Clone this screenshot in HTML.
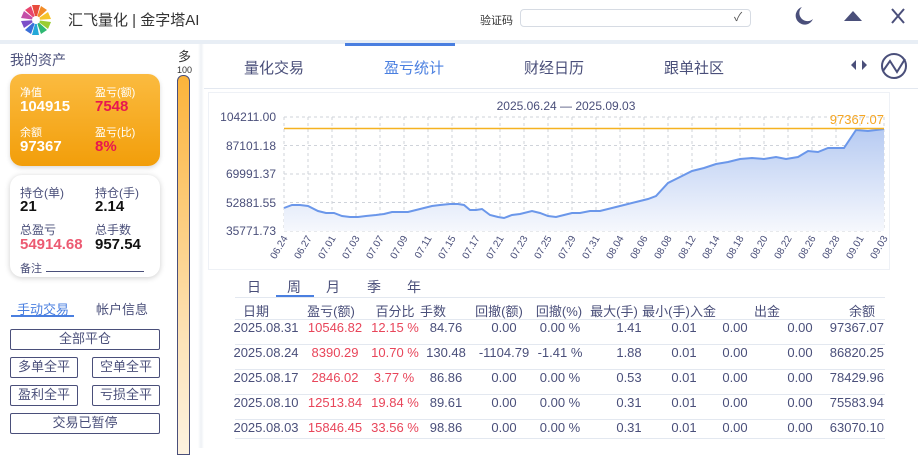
<!DOCTYPE html><html><head><meta charset="utf-8"><style>
*{margin:0;padding:0;box-sizing:border-box}
body{width:918px;height:448px;overflow:hidden;background:#fff;font-family:"Liberation Sans","Noto Sans CJK SC",sans-serif;color:#4a4f7a;position:relative}
.a{position:absolute;white-space:nowrap}
.btn{position:absolute;border:1px solid #4a4f7a;border-radius:2px;font-size:13px;text-align:center;line-height:18px;height:21px;color:#4a4f7a}
.c{position:absolute;transform:translateX(-50%);white-space:nowrap;font-size:13px}
.r{color:#e8455a}
.line{position:absolute;left:235px;width:650px;height:1px;background:#e3e8f0}
.lab{font-size:11px;color:#fff}
.val{font-size:15px;font-weight:bold;color:#fff}
.lab2{font-size:12px;color:#4a4f7a}
.val2{font-size:15px;font-weight:bold;color:#111}
</style></head><body>
<svg class="a" style="left:18px;top:4px" width="36" height="32" viewBox="-16 -16 32 32">
<path d="M0 0 L-4 -15 L4 -15Z" fill="#e84b3c"/><path d="M0 0 L5 -14 L11 -10Z" fill="#f28c28"/>
<path d="M0 0 L12 -8 L15 -1Z" fill="#f6c42a"/><path d="M0 0 L15 2 L12 9Z" fill="#9acd32"/>
<path d="M0 0 L11 10 L5 14Z" fill="#2eb872"/><path d="M0 0 L3 15 L-4 15Z" fill="#23a8d8"/>
<path d="M0 0 L-5 14 L-11 10Z" fill="#3a6fd8"/><path d="M0 0 L-12 8 L-15 1Z" fill="#7b4fc9"/>
<path d="M0 0 L-15 -2 L-12 -9Z" fill="#c44fa8"/><path d="M0 0 L-11 -10 L-5 -14Z" fill="#e8456e"/>
<circle r="4" fill="#fff"/></svg>
<div class="a" style="left:68px;top:9px;font-size:15px;color:#333">汇飞量化 | 金字塔AI</div>
<div class="a" style="left:480px;top:12px;font-size:11px;color:#333">验证码</div>
<div class="a" style="left:520px;top:9px;width:231px;height:18px;border:1px solid #d6dbe3;border-radius:4px"></div>
<div class="a" style="left:734px;top:8px;font-size:12px;color:#555">✓</div>
<svg class="a" style="left:793px;top:5px" width="22" height="22" viewBox="0 0 22 22"><path d="M9 2 A9 9 0 1 0 20 14 A7 7 0 0 1 9 2Z" fill="#4a4f7a"/></svg>
<svg class="a" style="left:843px;top:9px" width="20" height="14"><path d="M1 12 L10 2 L19 12Z" fill="#4a4f7a"/></svg>
<svg class="a" style="left:890px;top:7px" width="16" height="18"><path d="M2 2 L14 16 M14 2 L2 16" stroke="#4a4f7a" stroke-width="2"/></svg>
<div class="a" style="left:0;top:40px;width:918px;height:4px;background:#e8eef5"></div>
<div class="a" style="left:10px;top:50px;font-size:14px;color:#4a4f7a">我的资产</div>
<div class="a" style="left:10px;top:74px;width:150px;height:92px;border-radius:12px;background:linear-gradient(#fbbb40,#f29e0a);box-shadow:0 2px 5px rgba(0,0,0,.15)"></div>
<div class="a lab" style="left:20px;top:84px">净值</div><div class="a val" style="left:20px;top:98px">104915</div>
<div class="a lab" style="left:95px;top:84px">盈亏(额)</div><div class="a val" style="left:95px;top:98px;color:#e8174f">7548</div>
<div class="a lab" style="left:20px;top:124px">余额</div><div class="a val" style="left:20px;top:138px">97367</div>
<div class="a lab" style="left:95px;top:124px">盈亏(比)</div><div class="a val" style="left:95px;top:138px;color:#e8174f">8%</div>
<div class="a" style="left:10px;top:175px;width:150px;height:102px;border-radius:12px;background:#fff;box-shadow:0 1px 6px rgba(0,0,0,.2)"></div>
<div class="a lab2" style="left:20px;top:184px">持仓(单)</div><div class="a val2" style="left:20px;top:198px">21</div>
<div class="a lab2" style="left:95px;top:184px">持仓(手)</div><div class="a val2" style="left:95px;top:198px">2.14</div>
<div class="a lab2" style="left:20px;top:221px">总盈亏</div><div class="a val2" style="left:20px;top:236px;color:#ec5a72">54914.68</div>
<div class="a lab2" style="left:95px;top:221px">总手数</div><div class="a val2" style="left:95px;top:236px">957.54</div>
<div class="a" style="left:20px;top:260px;font-size:11px">备注</div>
<div class="a" style="left:46px;top:271px;width:98px;height:1px;background:#4a4f7a"></div>
<div class="a" style="left:178px;top:50px;font-size:13px;line-height:14px;color:#333">多</div>
<div class="a" style="left:177px;top:65px;font-size:9px;line-height:10px;width:16px;color:#333;font-family:'Liberation Sans Narrow','Liberation Sans',sans-serif">100</div>
<div class="a" style="left:177px;top:75px;width:13px;height:380px;border:1px solid #4a4f7a;border-radius:6px 6px 0 0;background:linear-gradient(#fbb33a,#fde3b8 70%,#fdf2e0)"></div>
<div class="a" style="left:198px;top:44px;width:6px;height:404px;background:linear-gradient(90deg,#fff,#eef1f5,#fff)"></div>
<div class="a" style="left:17px;top:299px;font-size:13px;color:#4a7fe0">手动交易</div>
<div class="a" style="left:11px;top:315px;width:63px;height:2px;background:#4a7fe0"></div>
<div class="a" style="left:96px;top:299px;font-size:13px;color:#4a4f7a">帐户信息</div>
<div class="btn" style="left:10px;top:329px;width:150px">全部平仓</div>
<div class="btn" style="left:10px;top:357px;width:68px">多单全平</div>
<div class="btn" style="left:92px;top:357px;width:68px">空单全平</div>
<div class="btn" style="left:10px;top:385px;width:68px">盈利全平</div>
<div class="btn" style="left:92px;top:385px;width:68px">亏损全平</div>
<div class="btn" style="left:10px;top:413px;width:150px">交易已暂停</div>
<div class="a" style="left:345px;top:43px;width:110px;height:3px;background:#4a7fe0"></div>
<div class="c" style="left:274px;top:57px;font-size:15px">量化交易</div>
<div class="c" style="left:414px;top:57px;font-size:15px;color:#4a7fe0">盈亏统计</div>
<div class="c" style="left:554px;top:57px;font-size:15px">财经日历</div>
<div class="c" style="left:694px;top:57px;font-size:15px">跟单社区</div>
<svg class="a" style="left:849px;top:58px" width="20" height="14"><path d="M2 7 L7 2 L7 12Z M18 7 L13 2 L13 12Z" fill="#4a4f7a"/></svg>
<svg class="a" style="left:880px;top:52px" width="28" height="28"><circle cx="14" cy="14" r="12" fill="none" stroke="#4a4f7a" stroke-width="2"/><path d="M3 19 L10 9 L17 20 L25 7" fill="none" stroke="#4a4f7a" stroke-width="2"/></svg>
<div class="a" style="left:204px;top:88px;width:714px;height:1px;background:#e3e8f0"></div>
<div class="a" style="left:208px;top:92px;width:682px;height:178px;border:1px solid #eef1f6"></div>
<div class="c" style="left:566px;top:99px;font-size:12px">2025.06.24 — 2025.09.03</div>
<svg class="a" style="left:200px;top:90px" width="718" height="180" viewBox="200 90 718 180" font-family="Liberation Sans" font-size="12">
<defs><linearGradient id="g" x1="0" y1="0" x2="0" y2="1"><stop offset="0" stop-color="#b7cbf2"/><stop offset="1" stop-color="#f6f8fd"/></linearGradient></defs>
<g stroke="#cfd3da" stroke-dasharray="3,3" stroke-width="1">
<path d="M284 117H884M284 145.5H884M284 174H884M284 202.5H884M284 231H884"/>
<path d="M284 117V231M308 117V231M332 117V231M356 117V231M380 117V231M404 117V231M428 117V231M452 117V231M476 117V231M500 117V231M524 117V231M548 117V231M572 117V231M596 117V231M620 117V231M644 117V231M668 117V231M692 117V231M716 117V231M740 117V231M764 117V231M788 117V231M812 117V231M836 117V231M860 117V231M884 117V231"/>
</g>
<path d="M284 208 L292 205 L300 205 L308 206 L318 211 L326 213 L334 213 L342 216 L350 217 L358 217 L366 216 L376 215 L384 214 L392 212 L400 212 L408 212 L416 210 L424 208 L432 206 L440 205 L450 204 L458 204 L464 205 L470 210 L476 210 L482 209 L490 215 L498 217 L504 218 L512 215 L520 214 L532 211 L540 213 L548 216 L556 217 L564 215 L572 213 L580 213 L590 211 L600 211 L612 208 L624 205 L636 202 L648 199 L656 196 L668 183 L680 177 L692 171 L704 168 L716 164 L728 162 L740 159 L752 158 L764 159 L776 157 L786 159 L798 157 L808 151 L818 152 L828 148 L844 148 L856 130 L868 131 L884 129 L884 231 L284 231Z" fill="url(#g)"/>
<path d="M284 208 L292 205 L300 205 L308 206 L318 211 L326 213 L334 213 L342 216 L350 217 L358 217 L366 216 L376 215 L384 214 L392 212 L400 212 L408 212 L416 210 L424 208 L432 206 L440 205 L450 204 L458 204 L464 205 L470 210 L476 210 L482 209 L490 215 L498 217 L504 218 L512 215 L520 214 L532 211 L540 213 L548 216 L556 217 L564 215 L572 213 L580 213 L590 211 L600 211 L612 208 L624 205 L636 202 L648 199 L656 196 L668 183 L680 177 L692 171 L704 168 L716 164 L728 162 L740 159 L752 158 L764 159 L776 157 L786 159 L798 157 L808 151 L818 152 L828 148 L844 148 L856 130 L868 131 L884 129" fill="none" stroke="#6b97ea" stroke-width="2"/>
<path d="M284 128.5H884" stroke="#f5b221" stroke-width="1.5"/>
<text x="884" y="124" text-anchor="end" fill="#f5a623" font-size="13">97367.07</text>
<g fill="#4a4f7a" text-anchor="end">
<text x="276" y="121">104211.00</text><text x="276" y="150">87101.18</text><text x="276" y="178">69991.37</text><text x="276" y="207">52881.55</text><text x="276" y="235">35771.73</text>
</g>
<g fill="#4a4f7a" font-size="10" text-anchor="end">
<text transform="translate(288,238) rotate(-60)">06.24</text><text transform="translate(312,238) rotate(-60)">06.27</text><text transform="translate(336,238) rotate(-60)">07.01</text><text transform="translate(360,238) rotate(-60)">07.03</text><text transform="translate(384,238) rotate(-60)">07.07</text><text transform="translate(408,238) rotate(-60)">07.09</text><text transform="translate(432,238) rotate(-60)">07.11</text><text transform="translate(456,238) rotate(-60)">07.15</text><text transform="translate(480,238) rotate(-60)">07.17</text><text transform="translate(504,238) rotate(-60)">07.21</text><text transform="translate(528,238) rotate(-60)">07.23</text><text transform="translate(552,238) rotate(-60)">07.25</text><text transform="translate(576,238) rotate(-60)">07.29</text><text transform="translate(600,238) rotate(-60)">07.31</text><text transform="translate(624,238) rotate(-60)">08.04</text><text transform="translate(648,238) rotate(-60)">08.06</text><text transform="translate(672,238) rotate(-60)">08.08</text><text transform="translate(696,238) rotate(-60)">08.12</text><text transform="translate(720,238) rotate(-60)">08.14</text><text transform="translate(744,238) rotate(-60)">08.18</text><text transform="translate(768,238) rotate(-60)">08.20</text><text transform="translate(792,238) rotate(-60)">08.22</text><text transform="translate(816,238) rotate(-60)">08.26</text><text transform="translate(840,238) rotate(-60)">08.28</text><text transform="translate(864,238) rotate(-60)">09.01</text><text transform="translate(888,238) rotate(-60)">09.03</text>
</g></svg>
<div class="c" style="left:254px;top:277px;font-size:14px">日</div>
<div class="c" style="left:294px;top:277px;font-size:14px">周</div>
<div class="c" style="left:333px;top:277px;font-size:14px">月</div>
<div class="c" style="left:374px;top:277px;font-size:14px">季</div>
<div class="c" style="left:414px;top:277px;font-size:14px">年</div>
<div class="a" style="left:276px;top:295px;width:38px;height:2px;background:#4a7fe0"></div>
<div class="line" style="top:297px"></div>
<div class="c" style="top:301px;left:256px">日期</div><div class="c" style="top:301px;left:331px">盈亏(额)</div><div class="c" style="top:301px;left:395px">百分比</div><div class="c" style="top:301px;left:433px">手数</div><div class="c" style="top:301px;left:499px">回撤(额)</div><div class="c" style="top:301px;left:559px">回撤(%)</div><div class="c" style="top:301px;left:614px">最大(手)</div><div class="c" style="top:301px;left:666px">最小(手)</div><div class="c" style="top:301px;left:703px">入金</div><div class="c" style="top:301px;left:767px">出金</div><div class="c" style="top:301px;left:862px">余额</div>
<div class="line" style="top:319px"></div>
<div class="line" style="top:344px"></div><div class="line" style="top:369px"></div><div class="line" style="top:394px"></div><div class="line" style="top:419px"></div><div class="line" style="top:438px"></div>
<div style="position:absolute;top:320px;left:0;width:918px">
<div class="c" style="top:0;left:266px">2025.08.31</div><div class="c r" style="top:0;left:335px">10546.82</div><div class="c r" style="top:0;left:395px">12.15 %</div><div class="c" style="top:0;left:446px">84.76</div><div class="c" style="top:0;left:504px">0.00</div><div class="c" style="top:0;left:560px">0.00 %</div><div class="c" style="top:0;left:629px">1.41</div><div class="c" style="top:0;left:684px">0.01</div><div class="c" style="top:0;left:735px">0.00</div><div class="c" style="top:0;left:800px">0.00</div><div class="a" style="top:0;right:34px;font-size:13px">97367.07</div>
</div>
<div style="position:absolute;top:345px;left:0;width:918px">
<div class="c" style="top:0;left:266px">2025.08.24</div><div class="c r" style="top:0;left:335px">8390.29</div><div class="c r" style="top:0;left:395px">10.70 %</div><div class="c" style="top:0;left:446px">130.48</div><div class="c" style="top:0;left:504px">-1104.79</div><div class="c" style="top:0;left:560px">-1.41 %</div><div class="c" style="top:0;left:629px">1.88</div><div class="c" style="top:0;left:684px">0.01</div><div class="c" style="top:0;left:735px">0.00</div><div class="c" style="top:0;left:800px">0.00</div><div class="a" style="top:0;right:34px;font-size:13px">86820.25</div>
</div>
<div style="position:absolute;top:370px;left:0;width:918px">
<div class="c" style="top:0;left:266px">2025.08.17</div><div class="c r" style="top:0;left:335px">2846.02</div><div class="c r" style="top:0;left:394px">3.77 %</div><div class="c" style="top:0;left:446px">86.86</div><div class="c" style="top:0;left:504px">0.00</div><div class="c" style="top:0;left:560px">0.00 %</div><div class="c" style="top:0;left:629px">0.53</div><div class="c" style="top:0;left:684px">0.01</div><div class="c" style="top:0;left:735px">0.00</div><div class="c" style="top:0;left:800px">0.00</div><div class="a" style="top:0;right:34px;font-size:13px">78429.96</div>
</div>
<div style="position:absolute;top:395px;left:0;width:918px">
<div class="c" style="top:0;left:266px">2025.08.10</div><div class="c r" style="top:0;left:335px">12513.84</div><div class="c r" style="top:0;left:395px">19.84 %</div><div class="c" style="top:0;left:446px">89.61</div><div class="c" style="top:0;left:504px">0.00</div><div class="c" style="top:0;left:560px">0.00 %</div><div class="c" style="top:0;left:629px">0.31</div><div class="c" style="top:0;left:684px">0.01</div><div class="c" style="top:0;left:735px">0.00</div><div class="c" style="top:0;left:800px">0.00</div><div class="a" style="top:0;right:34px;font-size:13px">75583.94</div>
</div>
<div style="position:absolute;top:420px;left:0;width:918px">
<div class="c" style="top:0;left:266px">2025.08.03</div><div class="c r" style="top:0;left:335px">15846.45</div><div class="c r" style="top:0;left:395px">33.56 %</div><div class="c" style="top:0;left:446px">98.86</div><div class="c" style="top:0;left:504px">0.00</div><div class="c" style="top:0;left:560px">0.00 %</div><div class="c" style="top:0;left:629px">0.31</div><div class="c" style="top:0;left:684px">0.01</div><div class="c" style="top:0;left:735px">0.00</div><div class="c" style="top:0;left:800px">0.00</div><div class="a" style="top:0;right:34px;font-size:13px">63070.10</div>
</div>
</body></html>
